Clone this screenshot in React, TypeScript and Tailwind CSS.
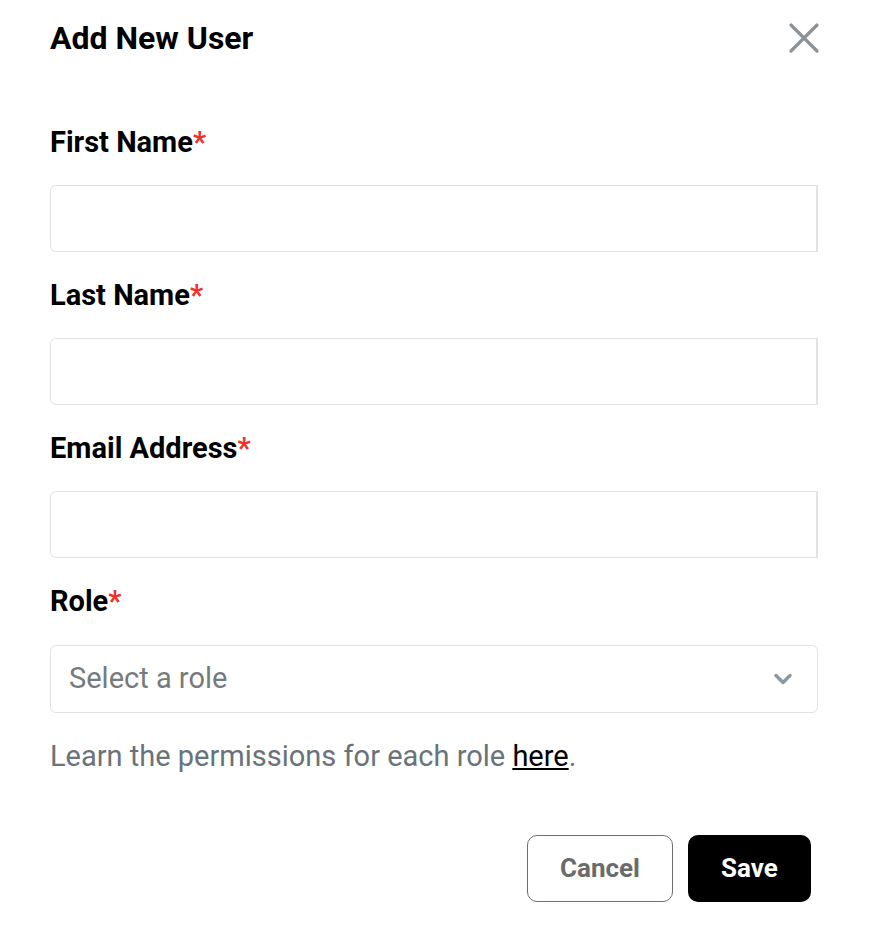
import { ChevronDown, X } from 'lucide-react'

const fields = ['First Name', 'Last Name', 'Email Address']

export default function App() {
  return (
    <div className="min-h-[936px] w-[872px] overflow-hidden bg-white font-['Roboto',sans-serif] text-black">
      <div className="pl-[50px] pr-[54px] pt-[20px]">
        {/* header */}
        <div className="flex h-9 items-center justify-between">
          <h1 className="text-[32px] font-bold leading-9">Add New User</h1>
          <button className="-mr-[12px] text-[#8a929a]" aria-label="Close">
            <X size={52} strokeWidth={1.5} />
          </button>
        </div>

        <form className="mt-[69px]">
          {fields.map((f) => (
            <div key={f} className="mb-[26px]">
              <label className="block text-[29px] font-bold leading-[34px]">
                {f}
                <span className="text-[#f0302a]">*</span>
              </label>
              <input
                type="text"
                className="mt-[26px] h-[67px] w-full rounded-l-md border border-r-2 border-[#e2e2e2] bg-white px-4 outline-none"
              />
            </div>
          ))}

          <div>
            <label className="block text-[29px] font-bold leading-[34px]">
              Role<span className="text-[#f0302a]">*</span>
            </label>
            <div className="mt-[27px] flex h-[68px] w-full items-center justify-between rounded-md border border-[#e2e2e2] pl-[18px] pr-[20px]">
              <span className="text-[29px] text-[#777a7d]">Select a role</span>
              <ChevronDown size={28} strokeWidth={3} className="text-[#8d99a2]" />
            </div>
          </div>

          <p className="mt-[26px] text-[29px] leading-[34px] text-[#6a727a]">
            Learn the permissions for each role{' '}
            <a href="#" className="text-black underline underline-offset-2">
              here
            </a>
            .
          </p>

          <div className="mt-[62px] flex justify-end gap-[15px] pr-[7px]">
            <button
              type="button"
              className="h-[67px] w-[146px] rounded-[10px] border border-[#6e6e6e] text-[26px] font-bold text-[#6b6b6b]"
            >
              Cancel
            </button>
            <button
              type="button"
              className="h-[67px] w-[123px] rounded-[10px] bg-black text-[26px] font-bold text-white"
            >
              Save
            </button>
          </div>
        </form>
      </div>
    </div>
  )
}
